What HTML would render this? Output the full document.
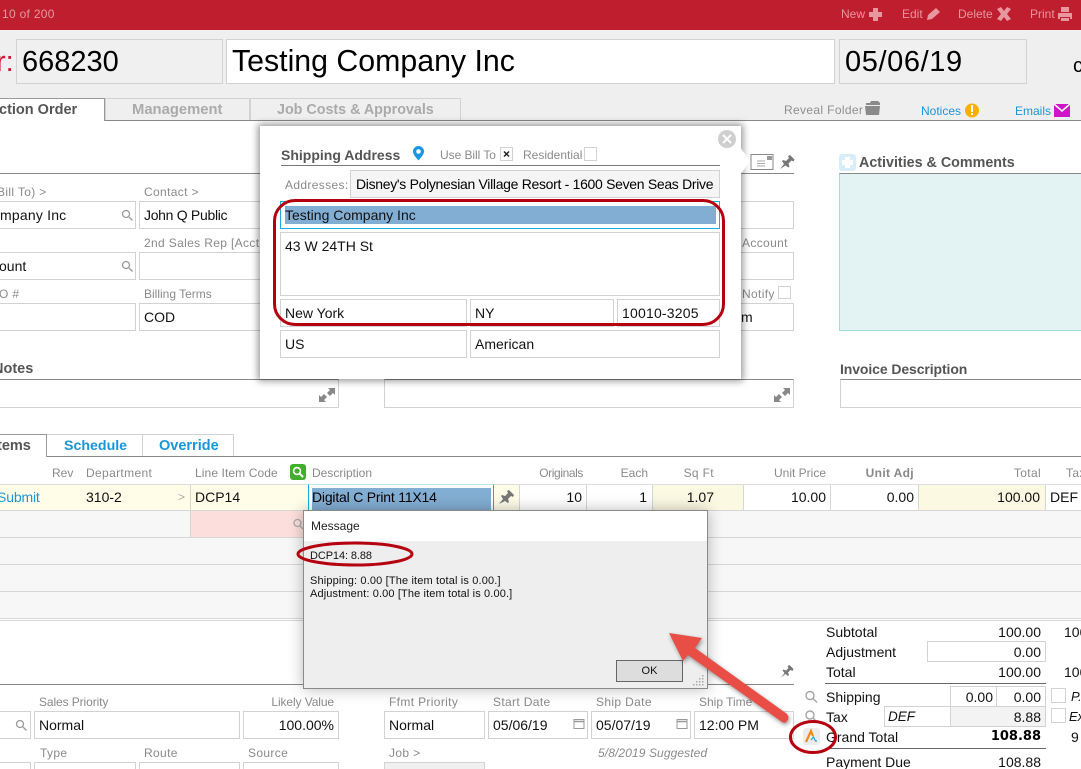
<!DOCTYPE html>
<html><head><meta charset="utf-8"><style>
html,body{margin:0;padding:0;background:#fff}
#p{position:relative;width:1081px;height:769px;overflow:hidden;background:#fff;font-family:"Liberation Sans",sans-serif;font-size:14px;color:#111}
#p div,#p span.a{position:absolute;box-sizing:border-box}
.t{white-space:nowrap;line-height:16px;height:16px}
.r{text-align:right}
.l{font-size:12px;color:#8a8a8a;letter-spacing:.35px}
.n{letter-spacing:0}
.b{font-weight:bold;color:#555;font-size:14px}
.i{border:1px solid #d2d2d2;background:#fff}
svg{position:absolute;overflow:visible}
</style></head><body><div id="p">
<div style="left:0;top:0;width:1081px;height:30px;background:#be1e2d"></div>
<div style="left:0;top:30px;width:1081px;height:90px;background:#efefef"></div>
<div style="left:0;top:120px;width:1081px;height:1px;background:#888"></div>
<div class="t" style="left:2px;top:6px;font-size:12px;color:#e39aa1;letter-spacing:.3px">10 of 200</div>
<div class="t" style="left:841px;top:6px;font-size:12px;color:#e8979f">New</div>
<div class="t" style="left:902px;top:6px;font-size:12px;color:#e8979f">Edit</div>
<div class="t" style="left:958px;top:6px;font-size:12px;color:#e8979f">Delete</div>
<div class="t" style="left:1030px;top:6px;font-size:12px;color:#e8979f">Print</div>
<svg style="left:0;top:0" width="1081" height="30">
<path d="M873 8h5v4h4v5h-4v4h-5v-4h-4v-5h4z" fill="#e8979f"/>
<path d="M927 20l1-5 8-7 4 4-8 7z" fill="#e8979f"/>
<path d="M997 9l4-2 3 4 3-4 4 2-4 5 4 5-4 2-3-4-3 4-4-2 4-5z" fill="#e8979f"/>
<path d="M1061 7h8v5h-8zM1058 13h14v6h-2v-2h-10v2h-2zM1061 18h8v3h-8z" fill="#e8979f"/>
</svg>
<div class="t" style="left:-4px;top:45px;font-size:29px;line-height:34px;height:34px;color:#d3163a">r:</div>
<div class="i" style="left:16px;top:39px;width:207px;height:45px;background:#f0f0f0"></div>
<div class="i" style="left:226px;top:39px;width:609px;height:45px"></div>
<div class="i" style="left:839px;top:39px;width:188px;height:45px;background:#f0f0f0"></div>
<div class="t" style="left:22px;top:45px;font-size:29px;line-height:34px;height:34px;color:#000">668230</div>
<div class="t" style="left:232px;top:45px;font-size:30.3px;line-height:34px;height:34px;color:#000">Testing Company Inc</div>
<div class="t" style="left:845px;top:45px;font-size:29px;line-height:34px;height:34px;color:#000;letter-spacing:.6px">05/06/19</div>
<div class="t" style="left:1073px;top:54px;font-size:20px;line-height:24px;height:24px;color:#000">c</div>

<div style="left:-2px;top:98px;width:107px;height:23px;background:#fff;border:1px solid #999;border-bottom:0"></div>
<div style="left:105px;top:98px;width:145px;height:22px;background:#efefef;border:1px solid #d2d2d2;border-bottom:0"></div>
<div style="left:250px;top:98px;width:211px;height:22px;background:#efefef;border:1px solid #d2d2d2;border-bottom:0"></div>
<div class="t b" style="left:-1px;top:102px;font-size:14.5px">ction Order</div>
<div class="t b" style="left:132px;top:102px;color:#aaa;font-size:14.8px">Management</div>
<div class="t b" style="left:277px;top:102px;color:#aaa;font-size:14.3px">Job Costs &amp; Approvals</div>
<div class="t" style="left:784px;top:102px;font-size:12px;color:#8e8e8e;letter-spacing:.35px">Reveal Folder</div>
<div class="t" style="left:921px;top:103px;font-size:12px;color:#1a96d8">Notices</div>
<div class="t" style="left:1015px;top:103px;font-size:12px;color:#1a96d8">Emails</div>
<svg style="left:0;top:95px" width="1081" height="30">
<path d="M866 8h4l1-2h7l2 2v2h-14zM865 11h15l-1 9h-13z" fill="#8a8a8a"/>
<circle cx="972" cy="15.5" r="7" fill="#fbb000"/><path d="M971 10h2v7h-2zM971 18h2v2h-2z" fill="#fff"/>
<rect x="1054" y="9" width="16" height="13" fill="#d014c8"/><path d="M1054 9l8 7 8-7" fill="none" stroke="#fff" stroke-width="1.5"/>
</svg>

<!-- upper form -->
<div style="left:0;top:173px;width:794px;height:1px;background:#888"></div>
<div class="t l" style="left:-3px;top:184px">Bill To) &gt;</div>
<div class="t l" style="left:144px;top:184px">Contact &gt;</div>
<div class="i" style="left:-2px;top:201px;width:138px;height:28px"></div>
<div class="i" style="left:139px;top:201px;width:130px;height:28px"></div>
<div class="t" style="left:0;top:207px;letter-spacing:.2px">mpany Inc</div>
<div class="t" style="left:144px;top:207px;letter-spacing:-.3px">John Q Public</div>
<div class="t l" style="left:144px;top:235px">2nd Sales Rep [Acct</div>
<div class="i" style="left:-2px;top:252px;width:138px;height:28px"></div>
<div class="i" style="left:139px;top:252px;width:130px;height:28px"></div>
<div class="t" style="left:-1px;top:258px">ount</div>
<div class="t l" style="left:-1px;top:286px">O #</div>
<div class="t l n" style="left:144px;top:286px">Billing Terms</div>
<div class="i" style="left:-2px;top:303px;width:138px;height:28px"></div>
<div class="i" style="left:139px;top:303px;width:130px;height:28px"></div>
<div class="t" style="left:144px;top:309px">COD</div>
<div class="i" style="left:700px;top:201px;width:94px;height:28px"></div>
<div class="i" style="left:700px;top:252px;width:94px;height:28px"></div>
<div class="i" style="left:700px;top:303px;width:94px;height:28px"></div>
<div class="t l" style="left:742px;top:235px">Account</div>
<div class="t l" style="left:742px;top:286px">Notify</div>
<div class="i" style="left:778px;top:286px;width:13px;height:13px"></div>
<div class="t" style="left:741px;top:309px">m</div>
<svg style="left:0;top:0" width="800" height="300">
<g fill="none" stroke="#999" stroke-width="1.3"><circle cx="126" cy="214" r="3.5"/><path d="M129 217l3.5 3.5"/><circle cx="126" cy="265" r="3.5"/><path d="M129 268l3.5 3.5"/></g>
<rect x="751" y="154.500" width="22" height="15" fill="#fff" stroke="#888"/><path d="M757 161h8M757 163.500h8M757 166h8" stroke="#aaa"/><rect x="767" y="156" width="5" height="4" fill="#999"/>
</svg>
<svg style="left:779px;top:155px" width="15" height="15"><path d="M1 14l4-5-2-3 1-1 3 1 3-3-1-2 2-1 4.500 4.500-1 2-2-1-3 3 1 3-1 1-3-2z" fill="#777"/></svg>
<div style="left:839px;top:154px;width:17px;height:17px;background:#d8edf7;border-radius:3px"></div>
<div style="left:845px;top:157px;width:5px;height:11px;background:#fff"></div>
<div style="left:842px;top:160px;width:11px;height:5px;background:#fff"></div>
<div class="t b" style="left:859px;top:155px;font-size:14.3px">Activities &amp; Comments</div>
<div style="left:839px;top:173px;width:260px;height:158px;background:#e3f3f3;border:1px solid #a8d8d8;border-top-color:#888"></div>

<div class="t b" style="left:-7px;top:361px;font-size:14.5px">Notes</div>
<div class="t b" style="left:840px;top:361px;font-size:14px;letter-spacing:-.1px">Invoice Description</div>
<div class="i" style="left:-2px;top:379px;width:341px;height:29px;border-top-color:#888"></div>
<div class="i" style="left:384px;top:379px;width:410px;height:29px;border-top-color:#888"></div>
<div class="i" style="left:840px;top:379px;width:260px;height:29px;border-top-color:#888"></div>
<svg style="left:0;top:380px" width="800" height="28">
<g fill="#888"><path d="M319 22v-7l2 2 3-3 3 3-3 3 2 2zM335 8v7l-2-2-3 3-3-3 3-3-2-2z"/><path d="M774 22v-7l2 2 3-3 3 3-3 3 2 2zM790 8v7l-2-2-3 3-3-3 3-3-2-2z"/></g>
</svg>

<!-- items tabs -->
<div style="left:0;top:456px;width:1081px;height:1px;background:#888"></div>
<div style="left:-2px;top:434px;width:49px;height:23px;background:#fff;border:1px solid #999;border-bottom:0"></div>
<div style="left:47px;top:434px;width:96px;height:22px;border:1px solid #d2d2d2;border-left:0;border-bottom:0"></div>
<div style="left:143px;top:434px;width:91px;height:22px;border:1px solid #d2d2d2;border-left:0;border-bottom:0"></div>
<div class="t b" style="left:-3px;top:438px;font-size:14.5px">tems</div>
<div class="t b" style="left:64px;top:438px;font-size:14.2px;color:#1a96d8">Schedule</div>
<div class="t b" style="left:159px;top:438px;font-size:14.5px;color:#1a96d8">Override</div>

<div class="t l n" style="left:52px;top:465px">Rev</div>
<div class="t l" style="left:86px;top:465px">Department</div>
<div class="t l n" style="left:195px;top:465px;letter-spacing:.1px">Line Item Code</div>
<div style="left:290px;top:464px;width:16px;height:16px;background:#42ae2c;border-radius:3px"></div>
<svg style="left:290px;top:464px" width="16" height="16"><circle cx="7" cy="7" r="3.4" fill="none" stroke="#fff" stroke-width="1.6"/><path d="M9.5 9.5l3.5 3.5" stroke="#fff" stroke-width="2"/></svg>
<div class="t l n" style="left:312px;top:465px">Description</div>
<div class="t l n r" style="right:498px;top:465px;letter-spacing:-.4px">Originals</div>
<div class="t l n r" style="right:433px;top:465px">Each</div>
<div class="t l r" style="right:367px;top:465px">Sq Ft</div>
<div class="t l n r" style="right:255px;top:465px">Unit Price</div>
<div class="t l r" style="right:167px;top:465px;font-weight:bold;color:#888">Unit Adj</div>
<div class="t l r" style="right:40px;top:465px">Total</div>
<div class="t l" style="left:1066px;top:465px">Tax</div>

<!-- rows -->
<div style="left:0;top:484px;width:1081px;height:1px;background:#ddd"></div>
<div style="left:0;top:485px;width:519px;height:25px;background:#fffde8"></div>
<div style="left:653px;top:485px;width:90px;height:25px;background:#fbf9e2"></div>
<div style="left:918px;top:485px;width:127px;height:25px;background:#fbf9e2"></div>
<div style="left:0;top:511px;width:1081px;height:108px;background:#f7f7f7"></div>
<div style="left:191px;top:511px;width:120px;height:26px;background:#fcdfdc"></div>
<svg style="left:292px;top:518px" width="12" height="12"><circle cx="5.500" cy="5" r="3.500" fill="none" stroke="#aaa" stroke-width="1.300"/><path d="M8 8l3 3" stroke="#aaa" stroke-width="1.300"/></svg>
<div style="left:0;top:510px;width:1081px;height:1px;background:#d6d6d6"></div>
<div style="left:0;top:537px;width:1081px;height:1px;background:#d6d6d6"></div>
<div style="left:0;top:564px;width:1081px;height:1px;background:#d6d6d6"></div>
<div style="left:0;top:591px;width:1081px;height:1px;background:#d6d6d6"></div>
<div style="left:0;top:618px;width:1081px;height:1px;background:#d6d6d6"></div>
<div style="left:0;top:620px;width:1081px;height:1px;background:#d6d6d6"></div>
<div style="left:190px;top:485px;width:1px;height:52px;background:#d6d6d6"></div>
<div style="left:586px;top:485px;width:1px;height:25px;background:#d6d6d6"></div>
<div style="left:652px;top:485px;width:1px;height:25px;background:#d6d6d6"></div>
<div style="left:743px;top:485px;width:1px;height:25px;background:#d6d6d6"></div>
<div style="left:830px;top:485px;width:1px;height:25px;background:#d6d6d6"></div>
<div style="left:918px;top:485px;width:1px;height:25px;background:#d6d6d6"></div>
<div style="left:1045px;top:485px;width:1px;height:25px;background:#d6d6d6"></div>
<div style="left:519px;top:485px;width:1px;height:25px;background:#d6d6d6"></div>
<div class="t" style="left:-3px;top:489px;color:#1a96d8;letter-spacing:-.15px">Submit</div>
<div class="t" style="left:86px;top:489px">310-2</div>
<div class="t l" style="left:178px;top:489px;color:#aaa">&gt;</div>
<div class="t" style="left:195px;top:489px">DCP14</div>
<div style="left:308px;top:484px;width:186px;height:27px;background:#fff;border:1px solid #16aee0;border-top-color:#bde6f4;border-bottom:0"></div>
<div style="left:312px;top:488px;width:179px;height:22px;background:#82aed3"></div>
<div class="t" style="left:312px;top:489px;color:#000;letter-spacing:-.2px">Digital C Print 11X14</div>
<div style="left:312px;top:504px;width:100px;height:7px;overflow:hidden"><div class="t" style="left:0;top:3px;color:#000">CLOSEN</div></div>
<svg style="left:498px;top:489px" width="16" height="16"><path d="M1 15l4-5-2-3 1-1 3 1 3-3-1-2 2-1 5 5-1 2-2-1-3 3 1 3-1 1-3-2z" fill="#777"/></svg>
<div class="t r" style="right:499px;top:489px">10</div>
<div class="t r" style="right:434px;top:489px">1</div>
<div class="t r" style="right:367px;top:489px">1.07</div>
<div class="t r" style="right:255px;top:489px">10.00</div>
<div class="t r" style="right:167px;top:489px">0.00</div>
<div class="t r" style="right:41px;top:489px">100.00</div>
<div class="t" style="left:1050px;top:489px">DEF</div>

<!-- lower section -->
<div style="left:0;top:684px;width:794px;height:1px;background:#888"></div>
<svg style="left:780px;top:665px" width="13" height="13"><path d="M1 12.500l3.500-4.500-2-2.500 1-1 2.500 1 2.500-2.500-1-2 2-1 4 4-1 2-2-1-2.500 2.500 1 2.500-1 1-2.500-2z" fill="#777"/></svg>
<div class="t l n" style="left:39px;top:694px;letter-spacing:-.1px">Sales Priority</div>
<div class="t l n r" style="right:747px;top:694px;letter-spacing:-.1px">Likely Value</div>
<div class="t l" style="left:389px;top:694px">Ffmt Priority</div>
<div class="t l" style="left:493px;top:694px">Start Date</div>
<div class="t l" style="left:596px;top:694px">Ship Date</div>
<div class="t l n" style="left:699px;top:694px">Ship Time</div>
<div class="i" style="left:-2px;top:711px;width:33px;height:28px"></div>
<div class="i" style="left:34px;top:711px;width:206px;height:28px"></div>
<div class="i" style="left:243px;top:711px;width:96px;height:28px"></div>
<div class="i" style="left:384px;top:711px;width:101px;height:28px"></div>
<div class="i" style="left:488px;top:711px;width:100px;height:28px"></div>
<div class="i" style="left:591px;top:711px;width:100px;height:28px"></div>
<div class="i" style="left:694px;top:711px;width:100px;height:28px"></div>
<div class="t" style="left:39px;top:717px">Normal</div>
<div class="t r" style="right:747px;top:717px">100.00%</div>
<div class="t" style="left:389px;top:717px">Normal</div>
<div class="t" style="left:493px;top:717px">05/06/19</div>
<div class="t" style="left:596px;top:717px">05/07/19</div>
<div class="t" style="left:699px;top:717px">12:00 PM</div>
<svg style="left:0;top:710px" width="700" height="30">
<g fill="none" stroke="#999" stroke-width="1.3"><circle cx="20" cy="14" r="3.5"/><path d="M23 17l3.5 3.5"/></g>
<g fill="#fff" stroke="#999"><rect x="574" y="9.500" width="10" height="9"/><rect x="677" y="9.500" width="10" height="9"/></g>
<path d="M574 11.500h10M677 11.500h10" stroke="#999" stroke-width="1.500"/>
</svg>
<div class="t l" style="left:40px;top:745px">Type</div>
<div class="t l" style="left:144px;top:745px">Route</div>
<div class="t l" style="left:248px;top:745px">Source</div>
<div class="t l" style="left:389px;top:745px">Job &gt;</div>
<div class="t l n" style="left:598px;top:745px;font-style:italic;letter-spacing:.1px">5/8/2019 Suggested</div>
<div class="i" style="left:-2px;top:762px;width:33px;height:12px"></div>
<div class="i" style="left:34px;top:762px;width:102px;height:12px"></div>
<div class="i" style="left:139px;top:762px;width:101px;height:12px"></div>
<div class="i" style="left:243px;top:762px;width:96px;height:12px"></div>
<div class="i" style="left:384px;top:762px;width:101px;height:12px;background:#f0f0f0"></div>

<!-- totals -->
<div class="t" style="left:826px;top:624px">Subtotal</div>
<div class="t r" style="right:40px;top:624px">100.00</div>
<div class="t" style="left:1064px;top:624px">100.00</div>
<div class="t" style="left:826px;top:644px">Adjustment</div>
<div class="i" style="left:927px;top:641px;width:119px;height:21px"></div>
<div class="t r" style="right:40px;top:644px">0.00</div>
<div class="t" style="left:826px;top:664px">Total</div>
<div class="t r" style="right:40px;top:664px">100.00</div>
<div class="t" style="left:1064px;top:664px">100.00</div>
<div style="left:825px;top:683px;width:221px;height:1px;background:#666"></div>
<div class="t" style="left:826px;top:689px">Shipping</div>
<div class="i" style="left:950px;top:686px;width:47px;height:21px"></div>
<div class="i" style="left:996px;top:686px;width:50px;height:21px"></div>
<div class="t r" style="right:88px;top:689px">0.00</div>
<div class="t r" style="right:40px;top:689px">0.00</div>
<div class="t" style="left:826px;top:709px">Tax</div>
<div class="i" style="left:884px;top:706px;width:67px;height:21px"></div>
<div class="i" style="left:950px;top:706px;width:96px;height:21px;background:#f3f3f3"></div>
<div class="t" style="left:888px;top:709px;font-style:italic;font-size:13.500px">DEF</div>
<div class="t r" style="right:40px;top:709px">8.88</div>
<div class="i" style="left:1051px;top:688px;width:15px;height:15px"></div>
<div class="i" style="left:1051px;top:708px;width:15px;height:15px"></div>
<div class="t" style="left:1071px;top:689px;font-style:italic;font-size:13px">P.O.</div>
<div class="t" style="left:1069px;top:709px;font-style:italic;font-size:13px">Exempt</div>
<div class="t" style="left:826px;top:729px">Grand Total</div>
<div class="t r" style="right:40px;top:729px;font-weight:bold;font-size:13px;font-family:'DejaVu Sans',sans-serif;color:#000">108.88</div>
<div class="t" style="left:1071px;top:729px">9</div>
<div style="left:825px;top:748px;width:221px;height:1px;background:#666"></div>
<div class="t" style="left:826px;top:754px">Payment Due</div>
<div class="t r" style="right:40px;top:754px">108.88</div>
<svg style="left:800px;top:685px" width="30" height="40"><g fill="none" stroke="#a5a5a5" stroke-width="1.4"><circle cx="10" cy="10.500" r="4"/><path d="M13 13.500l4 4"/><circle cx="10" cy="30" r="4"/><path d="M13 33l4 4"/></g></svg>
<div style="left:803px;top:728px;width:17px;height:17px;background:#ececec;border-radius:3px"></div>
<svg style="left:803px;top:728px" width="17" height="17"><path d="M3 14L8 3l2 5" fill="none" stroke="#ef8a14" stroke-width="2.200"/><path d="M8 12l2.500-3 2 4 1.500 0" fill="none" stroke="#1fa6c8" stroke-width="1.200"/></svg>

<!-- message dialog -->
<div style="left:303px;top:510px;width:405px;height:179px;background:#eee;border:1px solid #8a8a8a;box-shadow:0 0 14px rgba(0,0,0,.28)"></div>
<div style="left:304px;top:511px;width:403px;height:30px;background:#fff"></div>
<div class="t" style="left:311px;top:518px;font-size:12px;color:#222">Message</div>
<div class="t" style="left:310px;top:548px;font-size:11px;color:#111;letter-spacing:-.1px">DCP14: 8.88</div>
<div class="t" style="left:310px;top:573px;font-size:11px;color:#111;letter-spacing:.15px">Shipping: 0.00 [The item total is 0.00.]</div>
<div class="t" style="left:310px;top:586px;font-size:11px;color:#111;letter-spacing:.13px">Adjustment: 0.00 [The item total is 0.00.]</div>
<div style="left:616px;top:660px;width:67px;height:22px;background:#ddd;border:1px solid #666"></div>
<div class="t" style="left:616px;top:663px;width:67px;text-align:center;font-size:11px;color:#111">OK</div>
<svg style="left:693px;top:674px" width="14" height="14"><g fill="#aaa"><rect x="9" y="1" width="1.500" height="1.500"/><rect x="6" y="4" width="1.500" height="1.500"/><rect x="9" y="4" width="1.500" height="1.500"/><rect x="3" y="7" width="1.500" height="1.500"/><rect x="6" y="7" width="1.500" height="1.500"/><rect x="9" y="7" width="1.500" height="1.500"/><rect x="0" y="10" width="1.500" height="1.500"/><rect x="3" y="10" width="1.500" height="1.500"/><rect x="6" y="10" width="1.500" height="1.500"/><rect x="9" y="10" width="1.500" height="1.500"/></g></svg>

<!-- shipping popup -->
<div style="left:260px;top:126px;width:481px;height:253px;background:#fff;box-shadow:0 0 7px 2px rgba(0,0,0,.42)"></div>
<svg style="left:739px;top:146px" width="14" height="30"><path d="M1 1l10 14L1 29z" fill="#fff"/></svg>
<div style="left:718px;top:130px;width:18px;height:18px;border-radius:50%;background:#cfcfcf"></div>
<svg style="left:718px;top:130px" width="18" height="18"><path d="M5 5l8 8M13 5l-8 8" stroke="#fff" stroke-width="2"/></svg>
<div class="t b" style="left:281px;top:147px;font-size:14px">Shipping Address</div>
<svg style="left:411px;top:145px" width="14" height="16"><path d="M7.500 1a5.500 5.500 0 0 1 5.500 5.500c0 3-3 6-5.500 9-2.500-3-5.500-6-5.500-9a5.500 5.500 0 0 1 5.500-5.500z" fill="#1a96e0"/><circle cx="7.500" cy="6.500" r="2.300" fill="#fff"/></svg>
<div class="t l n" style="left:440px;top:147px;letter-spacing:-.05px">Use Bill To</div>
<div class="i" style="left:500px;top:147px;width:13px;height:14px"></div>
<svg style="left:500px;top:147px" width="13" height="14"><path d="M4 4.500l5 5M9 4.500l-5 5" stroke="#222" stroke-width="1.500"/></svg>
<div class="t l n" style="left:523px;top:147px">Residential</div>
<div class="i" style="left:584px;top:147px;width:13px;height:14px"></div>
<div style="left:281px;top:165px;width:439px;height:1px;background:#777"></div>
<div class="t l" style="left:285px;top:177px">Addresses:</div>
<div class="i" style="left:350px;top:170px;width:370px;height:28px;background:#f5f5f5"></div>
<div class="t" style="left:356px;top:176px;color:#000;letter-spacing:-.31px">Disney's Polynesian Village Resort - 1600 Seven Seas Drive</div>
<div style="left:280px;top:201px;width:440px;height:28px;border:1px solid #16aee0;background:#fff"></div>
<div style="left:285px;top:206px;width:431px;height:18px;background:#82aed3"></div>
<div class="t" style="left:285px;top:207px;color:#111">Testing Company Inc</div>
<div class="i" style="left:280px;top:232px;width:440px;height:64px"></div>
<div class="t" style="left:285px;top:238px">43 W 24TH St</div>
<div class="i" style="left:280px;top:299px;width:187px;height:28px"></div>
<div class="i" style="left:470px;top:299px;width:144px;height:28px"></div>
<div class="i" style="left:617px;top:299px;width:103px;height:28px"></div>
<div class="t" style="left:285px;top:305px">New York</div>
<div class="t" style="left:475px;top:305px">NY</div>
<div class="t" style="left:622px;top:305px;letter-spacing:.2px">10010-3205</div>
<div class="i" style="left:280px;top:330px;width:187px;height:28px"></div>
<div class="i" style="left:470px;top:330px;width:250px;height:28px"></div>
<div class="t" style="left:285px;top:336px">US</div>
<div class="t" style="left:475px;top:336px">American</div>
<div style="left:273px;top:199px;width:452px;height:127px;border:3px solid #b5000f;border-radius:22px"></div>

<!-- annotations -->
<svg style="left:0;top:0" width="1081" height="769">
<ellipse cx="355" cy="554" rx="57" ry="11" fill="none" stroke="#b5000f" stroke-width="3"/>
<ellipse cx="813" cy="737" rx="22.500" ry="15.500" fill="none" stroke="#b5000f" stroke-width="3"/>
<g style="filter:drop-shadow(1px 2px 2px rgba(0,0,0,.4))">
<path d="M669 633L702 638L695 648L787 714Q790 718 787 721Q785 724 782 722L688 655L683 661Z" fill="#e94e46"/>
</g>
</svg>
</div></body></html>
